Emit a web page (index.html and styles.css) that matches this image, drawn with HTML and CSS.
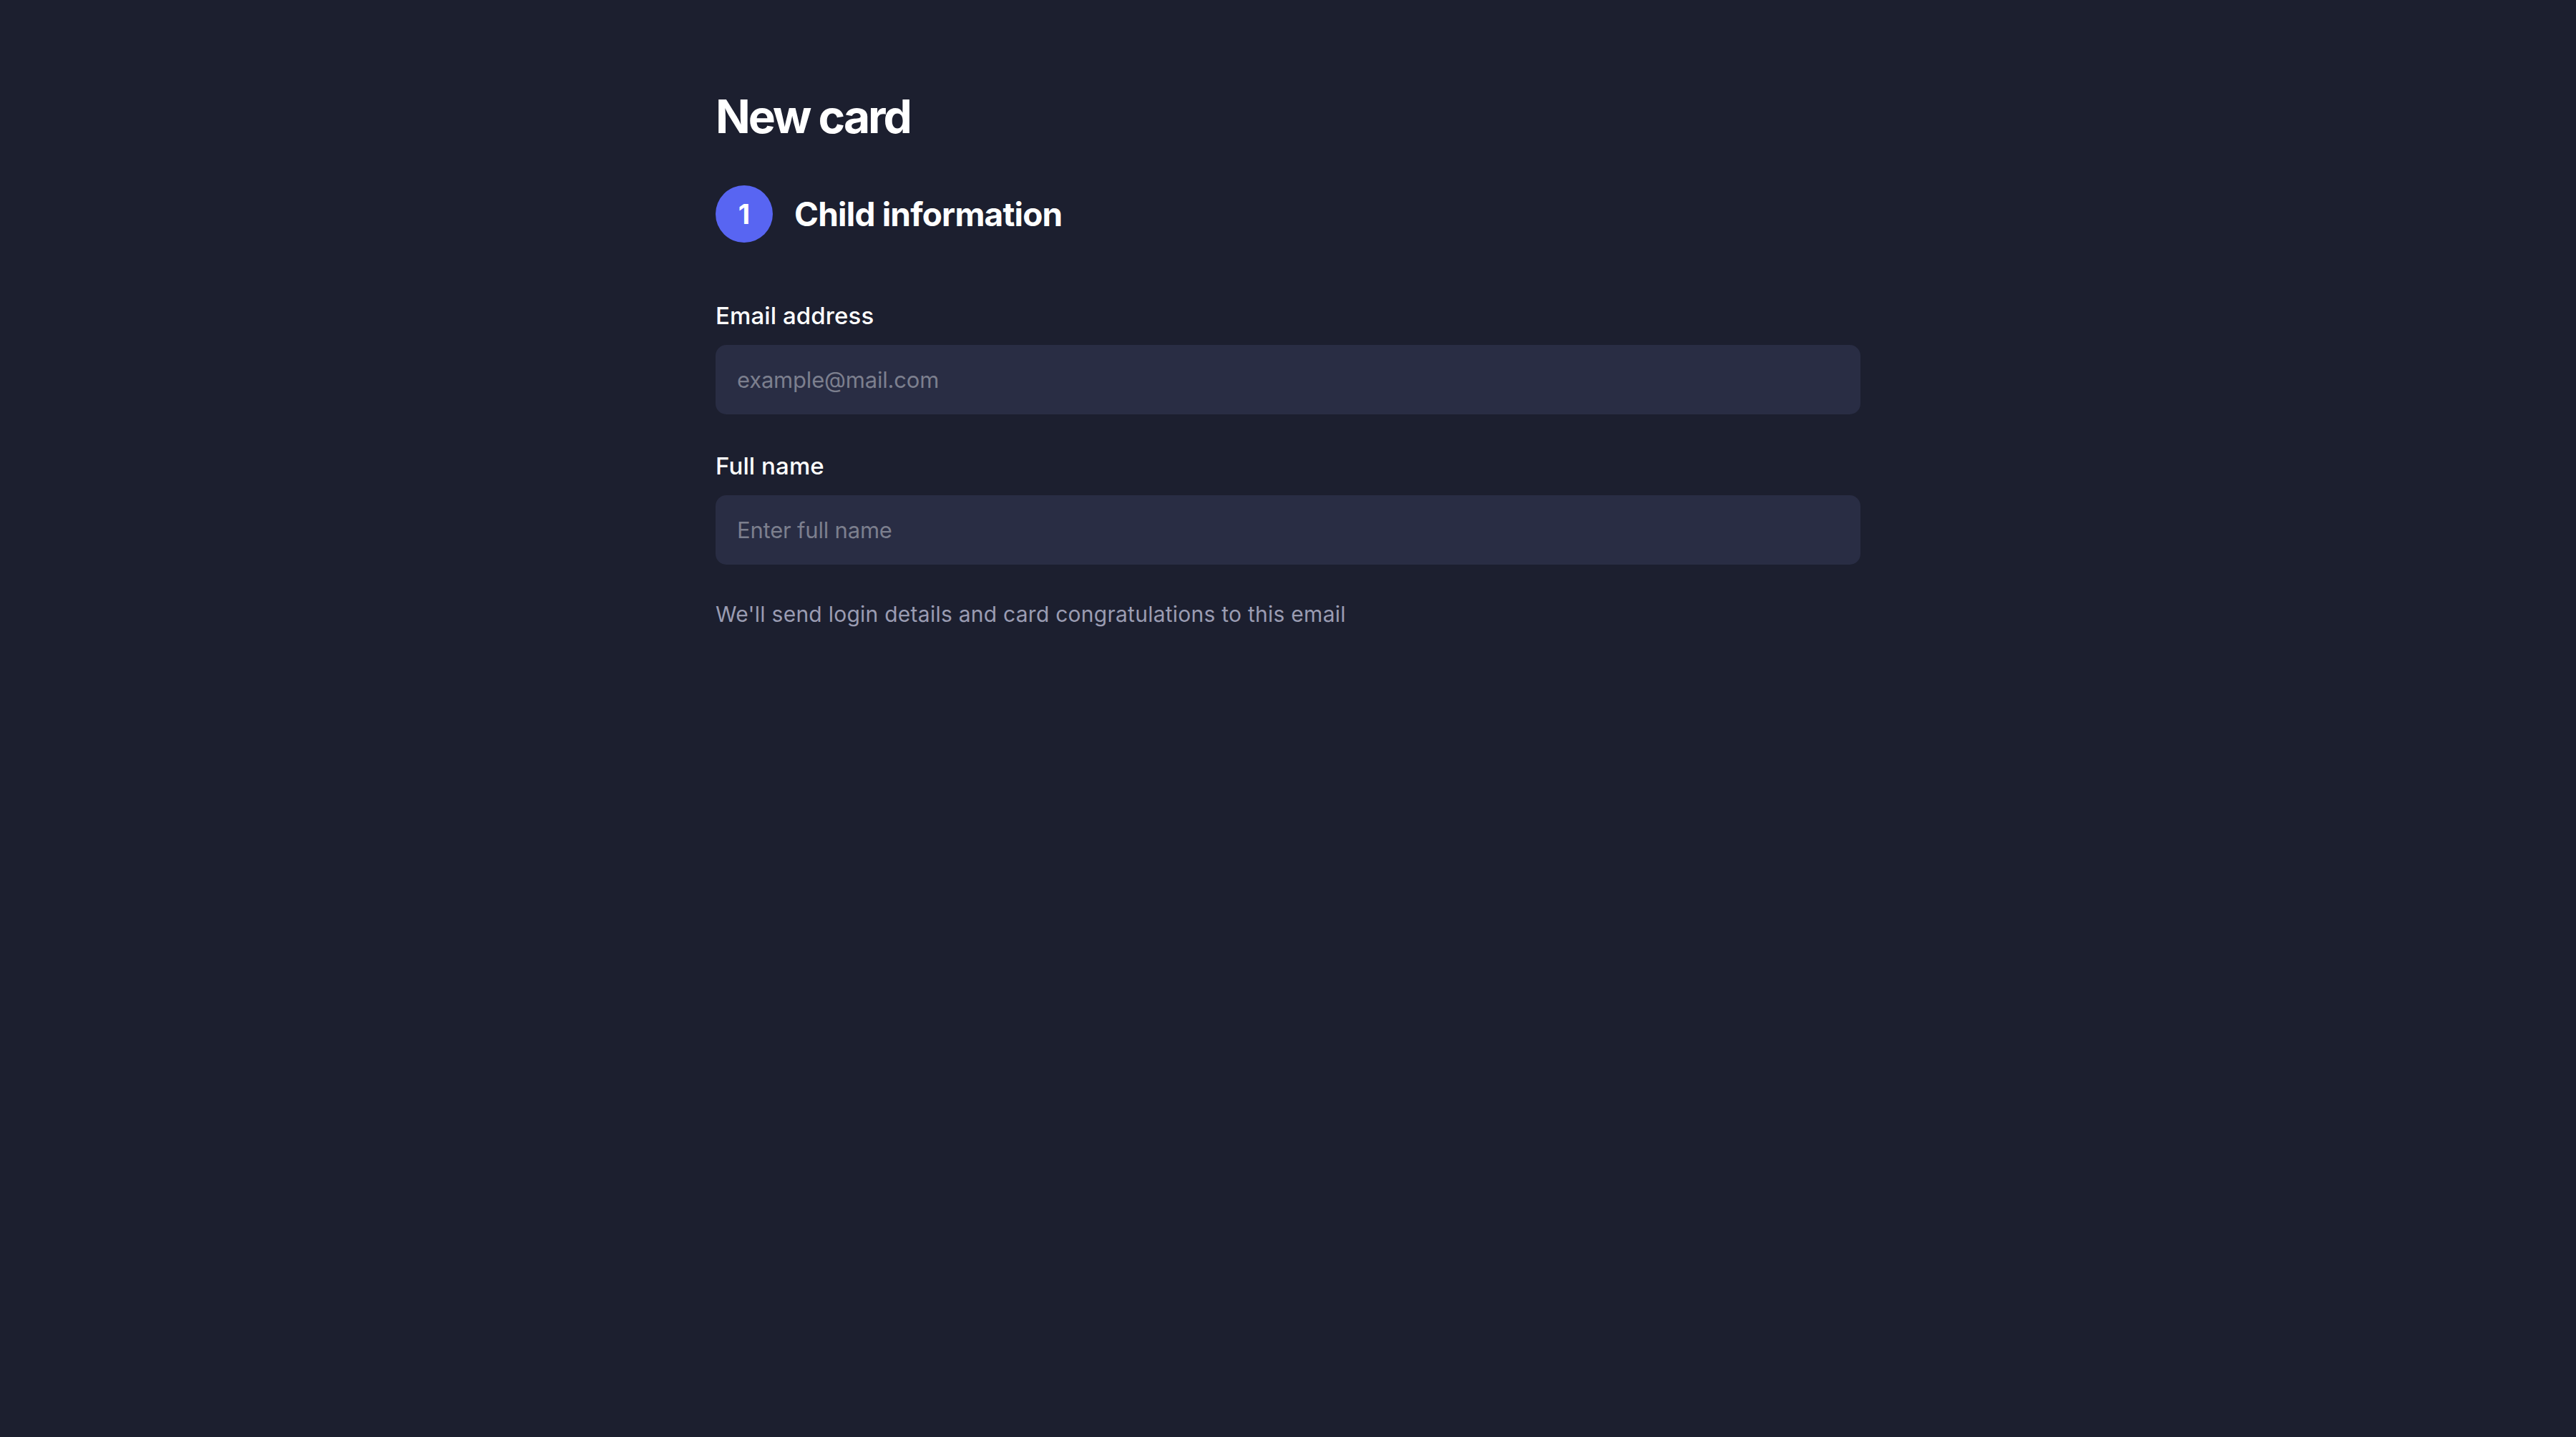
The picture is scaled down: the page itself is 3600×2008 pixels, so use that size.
FILE: index.html
```html
<!DOCTYPE html>
<html>
  <head>
    <title>New card</title>
    <meta charset="UTF-8">
    <meta name="viewport" content="width=device-width, initial-scale=1.0">
    <link rel="stylesheet" href="styles.css">
  </head>
  <body>
    <main class="page">
      <h1 class="page-title">New card</h1>

      <div class="step">
        <span class="step-num">1</span>
        <h2 class="step-title">Child information</h2>
      </div>

      <form class="card-form">
        <label class="field">
          <span class="field-label">Email address</span>
          <input type="email" class="field-input" placeholder="example@mail.com">
        </label>
        <label class="field">
          <span class="field-label">Full name</span>
          <input type="text" class="field-input" placeholder="Enter full name">
        </label>
        <p class="hint">We'll send login details and card congratulations to this email</p>
      </form>
    </main>
  </body>
</html>
```

FILE: styles.css
```css
body {
    margin: 0;
    background-color: #1c1f2f;
    color: #ffffff;
    font-family: Inter, "Noto Sans", sans-serif;
    min-height: 100vh;
}
.page {
    width: 1600px;
    margin: 0 auto;
    padding-top: 124px;
}
.page-title {
    margin: 0;
    font-size: 64px;
    line-height: 77px;
    font-weight: 700;
    letter-spacing: -3px;
}
.step {
    display: flex;
    align-items: center;
    gap: 30px;
    margin-top: 58px;
}
.step-num {
    width: 80px;
    height: 80px;
    border-radius: 50%;
    background-color: #5865f2;
    display: flex;
    align-items: center;
    justify-content: center;
    font-size: 38px;
    font-weight: 700;
}
.step-title {
    margin: 0;
    font-size: 46px;
    line-height: 56px;
    font-weight: 700;
    letter-spacing: -0.8px;
}
.card-form {
    margin-top: 82px;
    display: flex;
    flex-direction: column;
}
.field {
    display: flex;
    flex-direction: column;
    gap: 21px;
    margin-bottom: 52px;
}
.field-label {
    font-size: 33px;
    line-height: 40px;
    font-weight: 500;
    letter-spacing: 0.1px;
}
.field-input {
    box-sizing: border-box;
    height: 97px;
    width: 100%;
    padding: 0 30px;
    border: none;
    border-radius: 15px;
    background-color: #292d44;
    color: #ffffff;
    font-family: inherit;
    font-size: 31px;
    letter-spacing: -0.2px;
    outline: none;
}
.field-input::placeholder {
    color: #7c7f8e;
}
.hint {
    margin: -1px 0 0;
    font-size: 30px;
    line-height: 36px;
    color: #9a9cb2;
    letter-spacing: 0.25px;
}
```
